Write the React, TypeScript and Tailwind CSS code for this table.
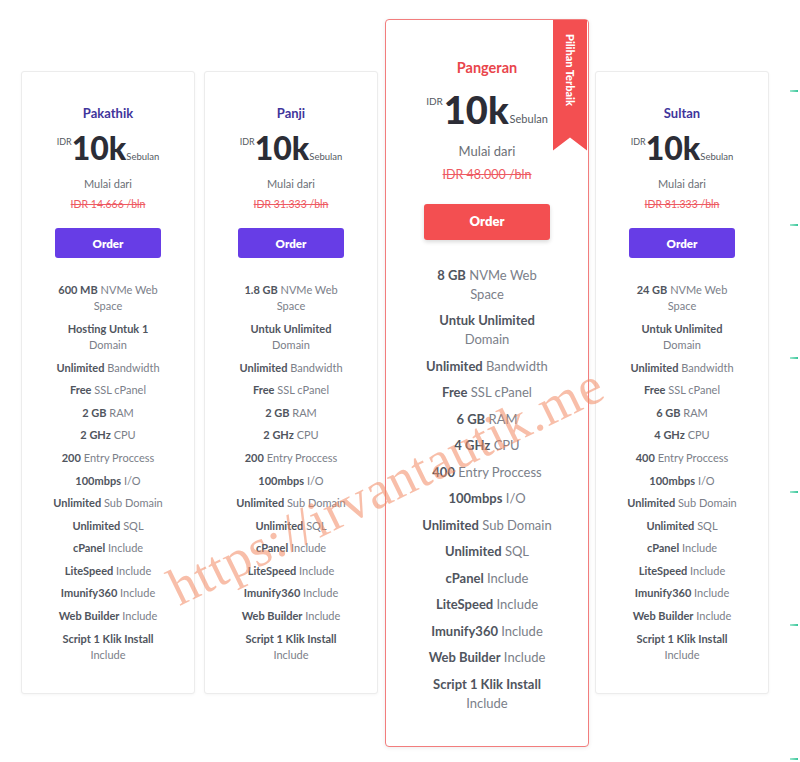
// Hosting price table — four plans, the middle one highlighted with a ribbon.

type Feature = { strong: string; rest: string };

interface Plan {
  name: string;
  was: string;
  features: Feature[];
  featured?: boolean;
}

function buildFeatures(space: string, domain: Feature, ram: string, cpu: string, entry: string): Feature[] {
  return [
    { strong: space, rest: 'NVMe Web Space' },
    domain,
    { strong: 'Unlimited', rest: 'Bandwidth' },
    { strong: 'Free', rest: 'SSL cPanel' },
    { strong: ram, rest: 'RAM' },
    { strong: cpu, rest: 'CPU' },
    { strong: entry, rest: 'Entry Proccess' },
    { strong: '100mbps', rest: 'I/O' },
    { strong: 'Unlimited', rest: 'Sub Domain' },
    { strong: 'Unlimited', rest: 'SQL' },
    { strong: 'cPanel', rest: 'Include' },
    { strong: 'LiteSpeed', rest: 'Include' },
    { strong: 'Imunify360', rest: 'Include' },
    { strong: 'Web Builder', rest: 'Include' },
    { strong: 'Script 1 Klik Install', rest: 'Include' },
  ];
}

const UNLIMITED_DOMAIN: Feature = { strong: 'Untuk Unlimited', rest: 'Domain' };

const PLANS: Plan[] = [
  {
    name: 'Pakathik',
    was: 'IDR 14.666 /bln',
    features: buildFeatures('600 MB', { strong: 'Hosting Untuk 1', rest: 'Domain' }, '2 GB', '2 GHz', '200'),
  },
  {
    name: 'Panji',
    was: 'IDR 31.333 /bln',
    features: buildFeatures('1.8 GB', UNLIMITED_DOMAIN, '2 GB', '2 GHz', '200'),
  },
  {
    name: 'Pangeran',
    was: 'IDR 48.000 /bln',
    features: buildFeatures('8 GB', UNLIMITED_DOMAIN, '6 GB', '4 GHz', '400'),
    featured: true,
  },
  {
    name: 'Sultan',
    was: 'IDR 81.333 /bln',
    features: buildFeatures('24 GB', UNLIMITED_DOMAIN, '6 GB', '4 GHz', '400'),
  },
];

function PlanCard({ plan }: { plan: Plan }) {
  if (plan.featured) {
    return (
      <div className="relative w-[204px] shrink-0 rounded-[4px] border-[1.5px] border-[#f27d7d] bg-white pt-[38px] pb-[33px] shadow-[0_1px_4px_rgba(0,0,0,0.08)]">
        <div className="absolute right-[1px] top-0 flex h-[131px] w-[34px] justify-center bg-[#f34f51] pt-[14px] [clip-path:polygon(0_0,100%_0,100%_100%,50%_90%,0_100%)]">
          <span className="text-[11px] font-black leading-none text-white [writing-mode:vertical-rl]">Pilihan Terbaik</span>
        </div>
        <h3 className="text-center text-[14.5px] font-bold leading-[20px] text-[#e9454b]">{plan.name}</h3>
        <div className="mt-[12px] flex items-end justify-center">
          <span className="mb-[22px] mr-[1px] text-[10px] leading-none text-[#555a62]">IDR</span>
          <span className="text-[38px] font-black leading-[38px] text-[#2c2d36]">10k</span>
          <span className="mb-[4px] ml-[1px] text-[11px] leading-none text-[#555a62]">Sebulan</span>
        </div>
        <p className="mt-[14px] text-center text-[13px] leading-[18px] text-[#6b6f76]">Mulai dari</p>
        <p className="mt-[6px] text-center text-[12.5px] leading-[18px] text-[#ee5a62] line-through">{plan.was}</p>
        <div className="mt-[20px] flex justify-center">
          <button className="h-[36px] w-[126px] rounded-[3px] bg-[#f34f51] text-[13px] font-extrabold text-white shadow-[0_2px_4px_rgba(0,0,0,0.15)]">
            Order
          </button>
        </div>
        <ul className="mx-auto mt-[26px] flex w-[134px] flex-col gap-[7.5px] text-center text-[13px] leading-[19px]">
          {plan.features.map((f, i) => (
            <li key={i}>
              <span className="font-bold text-[#50555e]">{f.strong}</span>{' '}
              <span className="text-[#7b8089]">{f.rest}</span>
            </li>
          ))}
        </ul>
      </div>
    );
  }

  return (
    <div className="w-[174px] shrink-0 rounded-[3px] border border-[#ececec] bg-white pt-[32px] pb-[30px] shadow-[0_1px_3px_rgba(0,0,0,0.04)]">
      <h3 className="text-center text-[13px] font-bold leading-[18px] text-[#3f359c]">{plan.name}</h3>
      <div className="mt-[10px] flex items-end justify-center">
        <span className="mb-[18px] text-[9px] leading-none text-[#555a62]">IDR</span>
        <span className="text-[32px] font-black leading-[32px] text-[#2c2d36]">10k</span>
        <span className="mb-[3px] text-[9.5px] leading-none text-[#555a62]">Sebulan</span>
      </div>
      <p className="mt-[12px] text-center text-[11px] leading-[16px] text-[#6b6f76]">Mulai dari</p>
      <p className="mt-[4px] text-center text-[10.5px] leading-[16px] text-[#ee5a62] line-through">{plan.was}</p>
      <div className="mt-[16px] flex justify-center">
        <button className="h-[30px] w-[106px] rounded-[3px] bg-[#673de6] text-[11.5px] font-extrabold text-white">
          Order
        </button>
      </div>
      <ul className="mx-auto mt-[24px] flex w-[112px] flex-col gap-[6.6px] text-center text-[11px] leading-[16px]">
        {plan.features.map((f, i) => (
          <li key={i}>
            <span className="font-bold text-[#50555e]">{f.strong}</span>{' '}
            <span className="text-[#7b8089]">{f.rest}</span>
          </li>
        ))}
      </ul>
    </div>
  );
}

export default function App() {
  return (
    <div className="relative h-[762px] w-[800px] overflow-hidden bg-white font-['Lato',sans-serif]">
      <div className="flex h-full items-center pl-[21px] pt-[3px]">
        <PlanCard plan={PLANS[0]} />
        <div className="ml-[9px]">
          <PlanCard plan={PLANS[1]} />
        </div>
        <div className="ml-[7px]">
          <PlanCard plan={PLANS[2]} />
        </div>
        <div className="ml-[6px]">
          <PlanCard plan={PLANS[3]} />
        </div>
        <div className="ml-[21px] flex flex-col gap-[131.5px] self-start pt-[87px]">
          {[0, 1, 2, 3, 4, 5].map((i) => (
            <span key={i} className="block h-[2px] w-[8px] bg-gradient-to-r from-[#9be8cf] to-[#2fc59a]" />
          ))}
        </div>
      </div>

      {/* watermark */}
      <div className="pointer-events-none absolute left-[386px] top-[486px] -translate-x-1/2 -translate-y-1/2 -rotate-[26deg] whitespace-nowrap font-['Liberation_Serif',serif] text-[53px] leading-none tracking-[1px] text-[#f38a63] opacity-55">
        https://irvantautik.me
      </div>
    </div>
  );
}
